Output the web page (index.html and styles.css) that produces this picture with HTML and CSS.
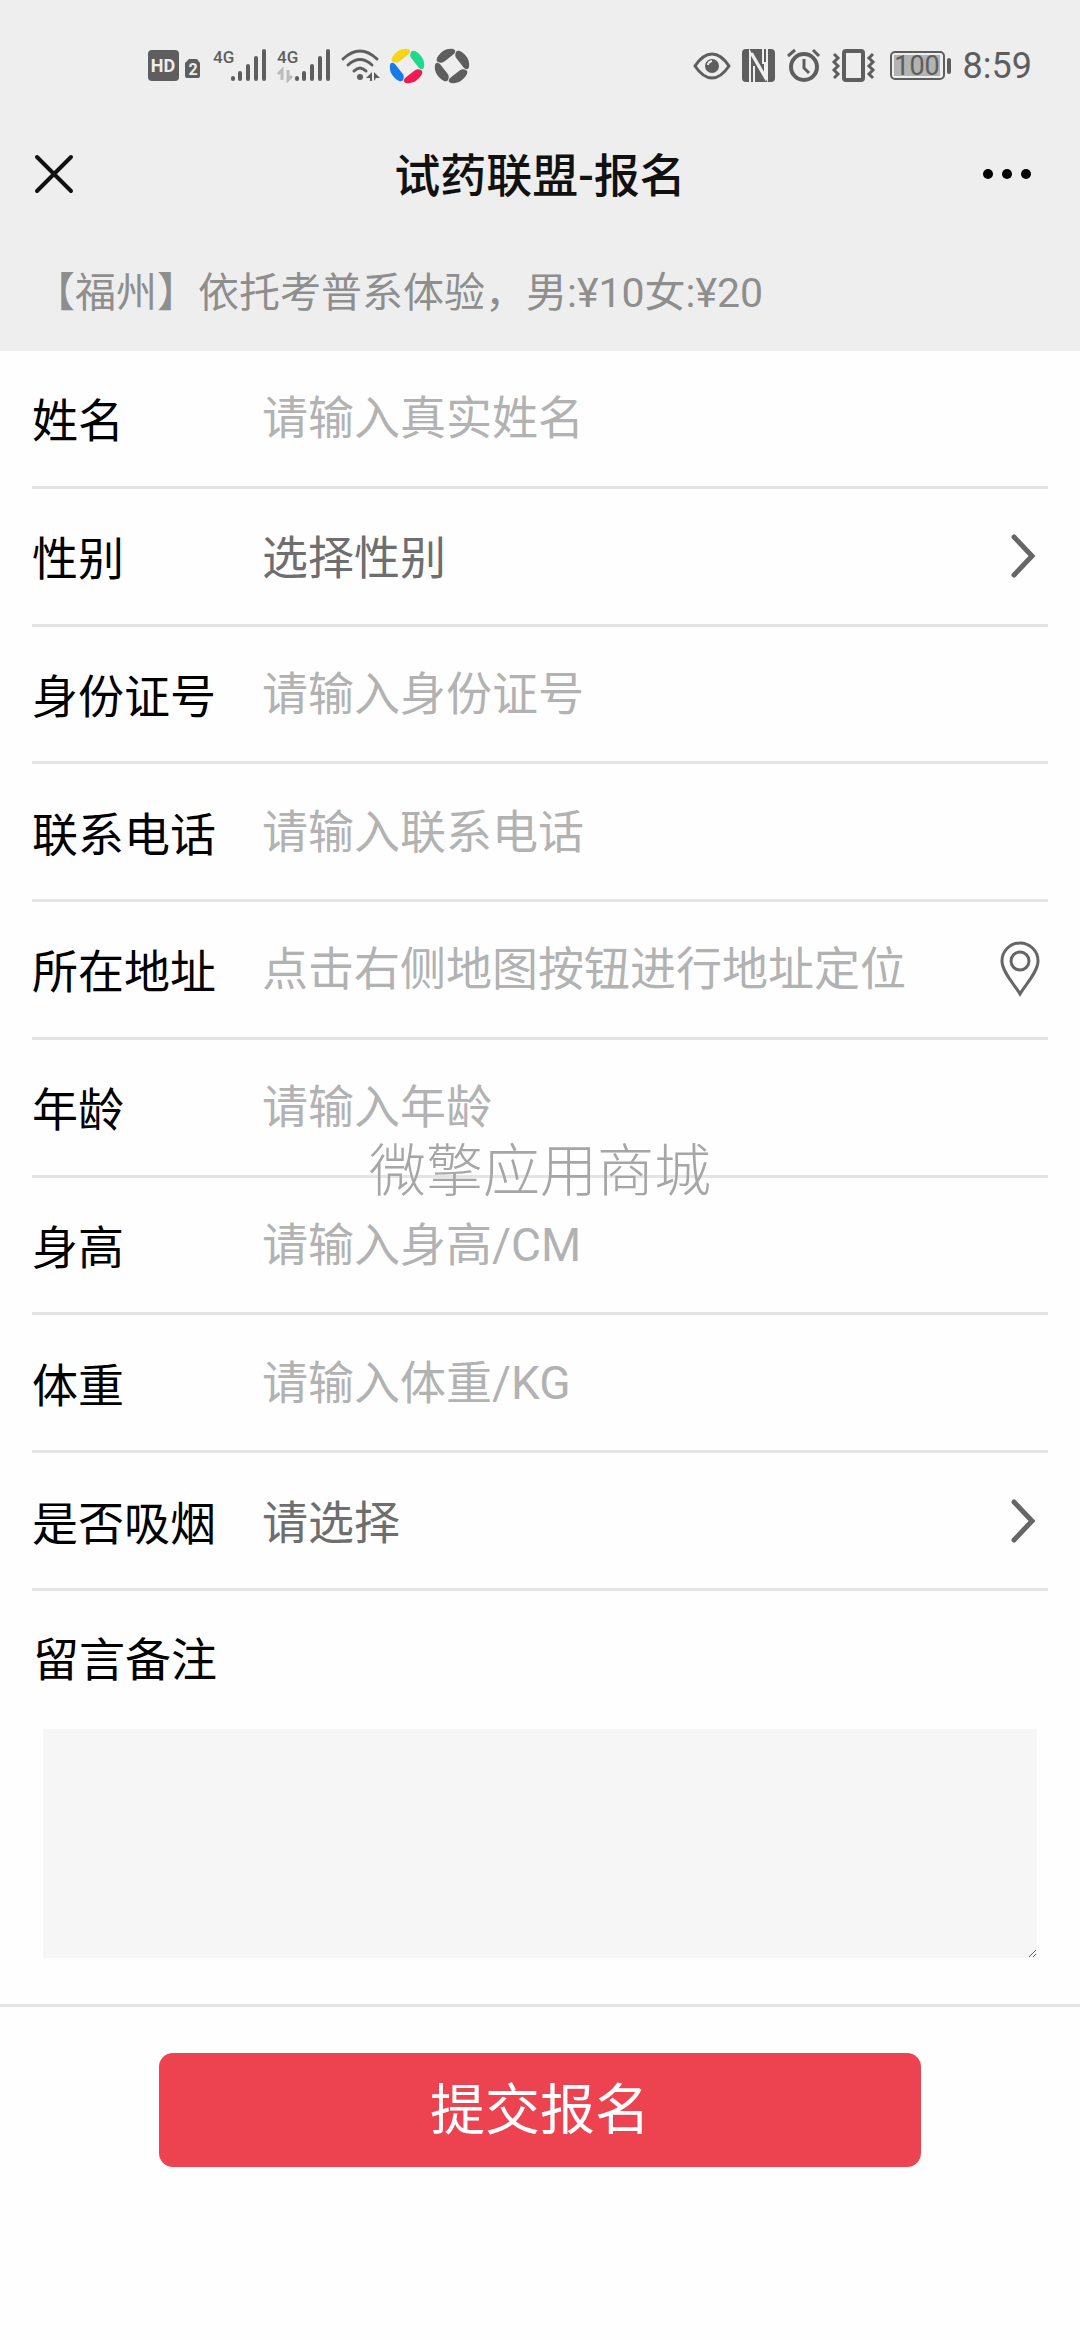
FILE: index.html
```
<!DOCTYPE html>
<html lang="zh-CN">
<head>
  <meta charset="UTF-8">
  <meta name="viewport" content="width=device-width, initial-scale=1.0">
  <title>试药联盟-报名</title>
  <link rel="stylesheet" href="styles.css">
</head>
<body>
  <header class="top">
    <div class="status-bar">
      <div class="status-left">
        <!-- HD / SIM 2 -->
        <svg width="56" height="36" viewBox="0 0 56 36">
          <rect x="0" y="2" width="31" height="31" rx="4" fill="#5e5e5e"/>
          <text x="15" y="24" font-size="18" font-weight="700" text-anchor="middle" fill="#eee">HD</text>
          <path d="M41 11h8l3 4v13a2 2 0 0 1-2 2H39a2 2 0 0 1-2-2V15z" fill="#5e5e5e"/>
          <text x="45" y="27" font-size="16" font-weight="700" text-anchor="middle" fill="#eee">2</text>
        </svg>
        <!-- Signal -->
        <svg width="55" height="36" viewBox="0 0 55 36">
          <text x="0" y="15" font-size="17" font-weight="500" fill="#5e5e5e">4G</text>
          <path d="M20 30v1M27 25v6M35 18v13M43 10v21M51 3v28" class="bars"/>
        </svg>
        <svg width="55" height="36" viewBox="0 0 55 36">
          <text x="0" y="15" font-size="17" font-weight="500" fill="#5e5e5e">4G</text>
          <path d="M5 32V22l-4 4M11 22v10l4-4" fill="none" stroke="#bbb" stroke-width="3"/>
          <path d="M20 30v1M27 25v6M35 18v13M43 10v21M51 3v28" class="bars"/>
        </svg>
        <!-- Wifi -->
        <svg width="39" height="36" viewBox="0 0 39 36">
          <g fill="none" stroke="#5e5e5e" stroke-width="3" stroke-linecap="round">
            <path d="M2 11Q19 -5 36 11"/>
            <path d="M7 17Q19 6 31 17"/>
            <path d="M13 23Q19 17 25 23"/>
          </g>
          <circle cx="19" cy="29" r="3" fill="#5e5e5e"/>
          <path d="M31 24v9h-2v-3h-4zM33 24l6 6h-4l-2 3z" fill="#5e5e5e"/>
        </svg>
        <!-- App notifications -->
        <svg width="36" height="36" viewBox="0 0 36 36">
          <defs>
            <path id="petal" d="M3 10C7 3 13 0 19 1Q23 2 20 6L11 13Q8 16 4 14Q2 13 3 10z"/>
          </defs>
          <use href="#petal" fill="#f6d419"/>
          <use href="#petal" fill="#1fd98c" transform="rotate(90 18 18)"/>
          <use href="#petal" fill="#ee1c55" transform="rotate(180 18 18)"/>
          <use href="#petal" fill="#167be8" transform="rotate(270 18 18)"/>
        </svg>
        <svg width="36" height="36" viewBox="0 0 36 36" fill="#5e5e5e">
          <use href="#petal"/>
          <use href="#petal" transform="rotate(90 18 18)"/>
          <use href="#petal" transform="rotate(180 18 18)"/>
          <use href="#petal" transform="rotate(270 18 18)"/>
        </svg>
      </div>
      <div class="status-right">
        <!-- Eye comfort -->
        <svg width="36" height="36" viewBox="0 0 36 36">
          <path d="M1 18Q9 6 18 6T35 18Q27 30 18 30T1 18z" fill="none" stroke="#5e5e5e" stroke-width="3"/>
          <circle cx="18" cy="18" r="7" fill="#5e5e5e"/>
          <path d="M14 17q0-3 4-4" fill="none" stroke="#eee" stroke-width="2"/>
        </svg>
        <!-- NFC -->
        <svg width="33" height="36" viewBox="0 0 33 36">
          <rect x="0" y="1" width="33" height="33" rx="4" fill="#5e5e5e"/>
          <path d="M8 35V4l15 26V14M12 35V18M25 0v31L10 5M21 0v16" fill="none" stroke="#eee" stroke-width="2"/>
        </svg>
        <!-- Alarm -->
        <svg width="33" height="36" viewBox="0 0 33 36">
          <g fill="none" stroke="#5e5e5e" stroke-width="4">
            <circle cx="17" cy="19" r="13"/>
            <path d="M17 11v9l5 5M1 8l7-6M26 2l6 6" stroke-width="3"/>
          </g>
        </svg>
        <!-- Vibrate -->
        <svg width="43" height="36" viewBox="0 0 43 36">
          <g fill="none" stroke="#5e5e5e" stroke-width="4">
            <rect x="12" y="3" width="19" height="29" rx="2"/>
            <path d="M2 6l4 4-4 4 4 4-4 4 4 4-4 4M41 6l-4 4 4 4-4 4 4 4-4 4 4 4" stroke-width="3"/>
          </g>
        </svg>
        <!-- Battery -->
        <svg width="64" height="36" viewBox="0 0 64 36">
          <rect x="4" y="4" width="53" height="27" rx="4" fill="none" stroke="#5e5e5e" stroke-width="2"/>
          <rect x="7" y="7" width="46" height="21" fill="#b3b3b3"/>
          <rect x="60" y="10" width="4" height="16" rx="2" fill="#5e5e5e"/>
          <text x="30" y="27" font-size="27" text-anchor="middle" fill="#5e5e5e">100</text>
        </svg>
        <time>8:59</time>
      </div>
    </div>

    <div class="nav-bar">
      <button type="button" class="nav-button" aria-label="关闭">
        <svg width="40" height="40" viewBox="0 0 40 40"><path d="M3 3l34 34M37 3L3 37" stroke="#111" stroke-width="4" stroke-linecap="round"/></svg>
      </button>
      <h1>试药联盟-报名</h1>
      <button type="button" class="nav-button" aria-label="更多">
        <svg width="50" height="40" viewBox="0 0 50 40"><circle cx="6" cy="20" r="5"/><circle cx="25" cy="20" r="5"/><circle cx="44" cy="20" r="5"/></svg>
      </button>
    </div>

    <p class="notice">【福州】依托考普系体验，男:¥10女:¥20</p>
  </header>

  <form class="signup">
    <div class="fields">
      <div class="field">
        <label for="name">姓名</label>
        <input type="text" id="name" placeholder="请输入真实姓名">
      </div>
      <div class="field">
        <label for="gender">性别</label>
        <select id="gender">
          <option value="">选择性别</option>
          <option>男</option>
          <option>女</option>
        </select>
        <svg class="arrow" width="28" height="46" viewBox="0 0 28 46"><path d="M4 4l18 19L4 42"/></svg>
      </div>
      <div class="field">
        <label for="idcard">身份证号</label>
        <input type="text" id="idcard" placeholder="请输入身份证号">
      </div>
      <div class="field">
        <label for="phone">联系电话</label>
        <input type="tel" id="phone" placeholder="请输入联系电话">
      </div>
      <div class="field">
        <label for="address">所在地址</label>
        <input type="text" id="address" placeholder="点击右侧地图按钮进行地址定位">
        <button type="button" class="locate" aria-label="地图定位">
          <svg width="40" height="56" viewBox="0 0 40 56">
            <path d="M20 53C15 44 2 31 2 20a18 18 0 0 1 36 0C38 31 25 44 20 53z"/>
            <circle cx="20" cy="20" r="9"/>
          </svg>
        </button>
      </div>
      <div class="field">
        <label for="age">年龄</label>
        <input type="text" id="age" placeholder="请输入年龄">
      </div>
      <div class="field">
        <label for="height">身高</label>
        <input type="text" id="height" placeholder="请输入身高/CM">
      </div>
      <div class="field">
        <label for="weight">体重</label>
        <input type="text" id="weight" placeholder="请输入体重/KG">
      </div>
      <div class="field">
        <label for="smoke">是否吸烟</label>
        <select id="smoke">
          <option value="">请选择</option>
          <option>是</option>
          <option>否</option>
        </select>
        <svg class="arrow" width="28" height="46" viewBox="0 0 28 46"><path d="M4 4l18 19L4 42"/></svg>
      </div>
    </div>

    <div class="remark">
      <label for="remark">留言备注</label>
      <textarea id="remark"></textarea>
    </div>

    <div class="submit">
      <button type="submit">提交报名</button>
    </div>
  </form>

  <div class="watermark">微擎应用商城</div>
</body>
</html>
```
FILE: styles.css
```
:root {
  --bar: #eeeeee;
  --icon: #5e5e5e;
  --line: #e4e4e4;
  --primary: #ed4350;
}

* {
  box-sizing: border-box;
}

body {
  margin: 0;
  position: relative;
  background-color: #fefefe;
  color: #000;
  font-family: Roboto, "Noto Sans CJK SC", sans-serif;
  font-size: 46px;
}

button,
input,
select,
textarea {
  font-family: inherit;
  font-size: inherit;
  border: none;
  border-radius: 0;
  background: none;
  padding: 0;
  margin: 0;
  outline: none;
}

svg {
  display: block;
  flex: none;
  overflow: visible;
}

.top {
  background-color: var(--bar);
}

.status-bar {
  display: flex;
  justify-content: space-between;
  height: 112px;
  padding: 20px 48px 0 148px;
}

.status-left,
.status-right {
  display: flex;
  align-items: center;
  gap: 9px;
}

.status-right {
  gap: 12px;
}

.status-right time {
  font-size: 36px;
  color: var(--icon);
}

.bars {
  stroke: var(--icon);
  stroke-width: 4;
  stroke-linecap: round;
}

.nav-bar {
  display: flex;
  justify-content: space-between;
  align-items: center;
  height: 124px;
  padding: 0 48px 0 34px;
}

.nav-button {
  width: 50px;
}

h1 {
  margin: 0;
  padding: 0 0 4px 14px;
  font-size: 46px;
  font-weight: 500;
  color: #111;
}

.notice {
  margin: 0;
  padding: 0 34px;
  font-size: 41px;
  line-height: 115px;
  color: #8e8e8e;
}

.fields {
  display: grid;
  grid-auto-rows: 1fr;
  min-height: 1240px;
  padding: 0 32px;
}

.field {
  display: flex;
  align-items: center;
  border-bottom: 3px solid var(--line);
}

.field label {
  width: 230px;
  flex: none;
  padding-bottom: 2px;
}

.field input,
.field select {
  flex: 1;
  min-width: 0;
  height: 100%;
}

.field input::placeholder {
  color: #b2b2b2;
}

.field select {
  appearance: none;
  padding-top: 4px;
  color: #6e6e6e;
}

.arrow {
  margin-right: 10px;
  fill: none;
  stroke: #666;
  stroke-width: 5;
  stroke-linecap: round;
}

.locate {
  margin-right: 8px;
}

.locate svg {
  fill: none;
  stroke: #666;
  stroke-width: 3;
}

.remark {
  padding: 0 43px 46px;
  border-bottom: 3px solid var(--line);
}

.remark label {
  display: block;
  margin-left: -10px;
  line-height: 138px;
}

.remark textarea {
  display: block;
  width: 100%;
  height: 229px;
  padding: 16px;
  background-color: #f6f6f6;
}

.submit {
  padding: 46px 159px;
}

.submit button {
  width: 100%;
  height: 114px;
  padding-bottom: 10px;
  border-radius: 14px;
  background-color: var(--primary);
  color: #fff;
  font-size: 55px;
}

/* floats over the form */
.watermark {
  position: absolute;
  top: 1166px;
  left: 50%;
  transform: translate(-50%, -50%);
  font-size: 57px;
  font-weight: 300;
  color: #a6a6a6;
  white-space: nowrap;
  pointer-events: none;
}
```
